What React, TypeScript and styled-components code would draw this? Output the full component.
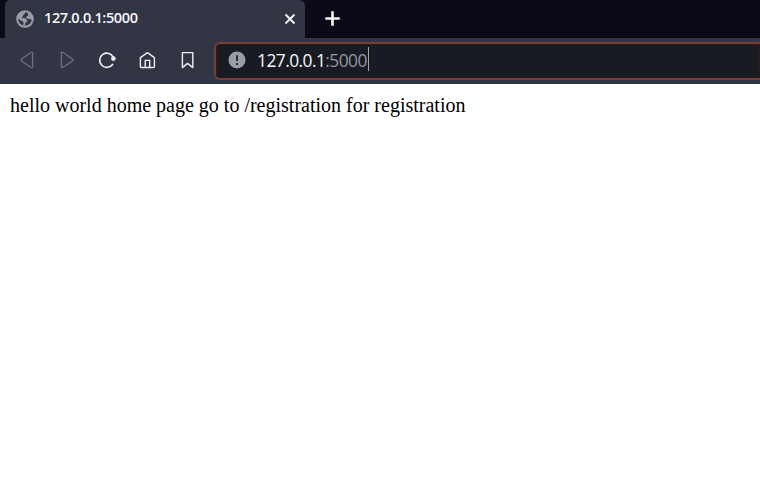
import React from 'react';
import styled, { createGlobalStyle } from 'styled-components';

const GlobalStyle = createGlobalStyle`
  * { box-sizing: border-box; }
  body { margin: 0; background: #fff; overflow: hidden; }
`;

const Browser = styled.div`
  display: flex;
  flex-direction: column;
  height: 100vh;
  background: #fff;
`;

const TabStrip = styled.div`
  display: flex;
  flex: none;
  height: 38px;
  padding-left: 5px;
  background: #0b0a16;
`;

const Tab = styled.div`
  display: flex;
  align-items: center;
  width: 300px;
  padding: 0 9px 0 11px;
  background: #323544;
  border-radius: 5px 6px 0 0;
`;

const TabTitle = styled.span`
  flex: 1;
  margin: 0 0 2px 10px;
  color: #f5f6fa;
  font: 600 14.5px/20px 'Open Sans', sans-serif;
  letter-spacing: -0.37px;
`;

const TabButton = styled.button<{ $gap?: number }>`
  display: flex;
  align-items: center;
  padding: 0;
  margin-left: ${({ $gap }) => $gap ?? 0}px;
  border: 0;
  background: none;
`;

const Toolbar = styled.div`
  display: flex;
  flex: none;
  align-items: center;
  height: 46px;
  padding: 0 0 1px 17px;
  background: #323544;
`;

const ToolButton = styled.button<{ $disabled?: boolean }>`
  display: flex;
  width: 20px;
  height: 20px;
  margin: 0 20px 1px 0;
  padding: 0;
  border: 0;
  background: none;
  color: ${({ $disabled }) => ($disabled ? '#6b6e7c' : '#eceef5')};
`;

const AddressBar = styled.div`
  display: flex;
  flex: 1;
  align-items: center;
  height: 38px;
  margin-left: -3px;
  padding: 0 0 1px 12px;
  border: 2px solid #7b3b38;
  border-right: 0;
  border-radius: 6px 0 0 6px;
  background: #181b22;
  box-shadow: inset 0 0 0 1px #2b1b1e;
`;

const Address = styled.span`
  margin: 0 0 1px 11px;
  color: #9297a0;
  font: 400 17.4px/24px 'Open Sans', sans-serif;
  letter-spacing: -0.56px;
  white-space: nowrap;
`;

const Host = styled.span`
  color: #f7f8fb;
`;

const Caret = styled.span`
  width: 1px;
  height: 24px;
  margin: 0 0 2px 1px;
  background: #a3a5ab;
`;

const Page = styled.main`
  flex: 1;
  padding: 10px;
  color: #000;
  font: 20px/23px 'Liberation Serif', serif;
  white-space: nowrap;
`;

const Globe = () => (
  <svg width="18" height="18" viewBox="0 0 18 18">
    <circle cx="9" cy="9" r="8.8" fill="#9a9ca6" />
    <path
      d="M9 2.3C9.5 4.3 7.4 4.1 7.3 5.4C7.2 6.8 5.6 6.3 5.9 7.8C6.3 8.8 9.6 7.6 10 9.2C10.2 10.4 12 9.8 11.3 11.3C10.5 12.5 8.9 12.4 8.9 15.6C12.9 15.7 15.7 12.6 15.7 9.2C14.2 10.1 13.8 8.4 12.3 8.8C10.6 9 9.4 7.8 10.5 6.7C11.8 6.2 12.5 5.5 12 3.2C11 2.5 10 2.3 9 2.3ZM2.4 8.3C2 12 4.3 14.8 7.3 15.5C7 13.7 8.3 13.2 7.1 11.7C6.6 10.8 5.4 11.4 4.4 10.3Z"
      fill="#323544"
    />
  </svg>
);

const Stroke = ({ d, width = 1.4 }: { d: string; width?: number }) => (
  <path d={d} fill="none" stroke="currentColor" strokeWidth={width} strokeLinejoin="round" strokeLinecap="round" />
);

const Icon = ({ children }: { children: React.ReactNode }) => (
  <svg width="20" height="20" viewBox="0 0 20 20">{children}</svg>
);

export default function App() {
  return (
    <Browser>
      <GlobalStyle />
      <TabStrip>
        <Tab>
          <Globe />
          <TabTitle>127.0.0.1:5000</TabTitle>
          <TabButton aria-label="Close tab">
            <svg width="12" height="12" viewBox="0 0 12 12">
              <path d="M1.5 1.5L10.5 10.5M10.5 1.5L1.5 10.5" stroke="#f5f6fa" strokeWidth="1.9" />
            </svg>
          </TabButton>
        </Tab>
        <TabButton aria-label="New tab" $gap={20}>
          <svg width="16" height="16" viewBox="0 0 16 16">
            <path d="M0.3 7.5H14.7M7.5 0.3V14.7" stroke="#f8f8fb" strokeWidth="2.6" />
          </svg>
        </TabButton>
      </TabStrip>
      <Toolbar>
        <ToolButton $disabled aria-label="Back">
          <Icon><Stroke d="M14.2 2.3L4.4 9.2Q3.5 10 4.4 10.8L14.2 17.5Q15.6 18 15.6 16.6V3.2Q15.6 1.8 14.2 2.3Z" /></Icon>
        </ToolButton>
        <ToolButton $disabled aria-label="Forward">
          <Icon><Stroke d="M5.8 2.3L15.6 9.2Q16.5 10 15.6 10.8L5.8 17.5Q4.4 18 4.4 16.6V3.2Q4.4 1.8 5.8 2.3Z" /></Icon>
        </ToolButton>
        <ToolButton aria-label="Reload">
          <Icon>
            <Stroke d="M16.3 7.4A7.1 7.1 0 1 0 15.6 14.4" width={1.7} />
            <circle cx="16.4" cy="8.6" r="2.3" fill="currentColor" />
          </Icon>
        </ToolButton>
        <ToolButton aria-label="Home">
          <Icon>
            <Stroke d="M3.4 7.6L10.4 2.6L17.4 7.6V16.4Q17.4 17.5 16.3 17.5H4.5Q3.4 17.5 3.4 16.4Z" />
            <Stroke d="M8.2 17.2V10.4H12.7V17.2" />
          </Icon>
        </ToolButton>
        <ToolButton aria-label="Bookmark">
          <Icon><Stroke d="M5.4 2.6H15.8V17.6L10.6 13.4L5.4 17.6Z" /></Icon>
        </ToolButton>
        <AddressBar>
          <svg width="18" height="18" viewBox="0 0 18 18">
            <circle cx="9" cy="9" r="8.5" fill="#9b9da4" />
            <path d="M9 4.2V10M9 12V14" stroke="#181b22" strokeWidth="1.7" />
          </svg>
          <Address><Host>127.0.0.1</Host>:5000</Address>
          <Caret />
        </AddressBar>
      </Toolbar>
      <Page>hello world home page go to /registration for registration</Page>
    </Browser>
  );
}
